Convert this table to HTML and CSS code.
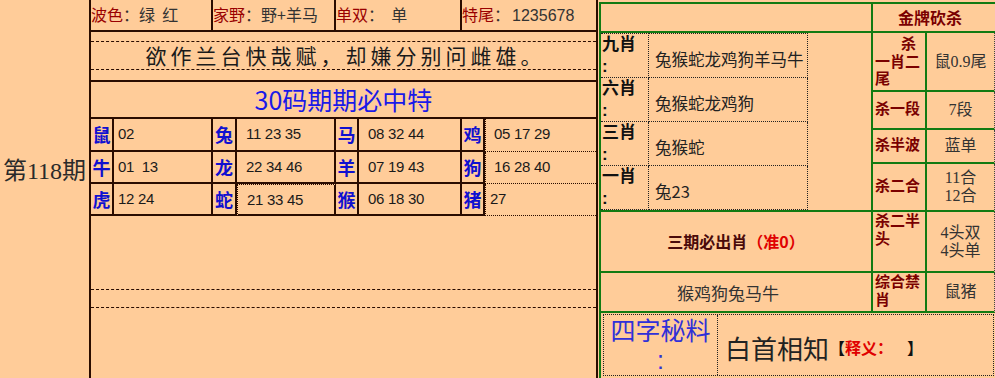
FILE: index.html
```html
<!DOCTYPE html>
<html lang="zh">
<head>
<meta charset="utf-8">
<title>第118期</title>
<link rel="stylesheet" href="styles.css">
</head>
<body>
<div class="page">
  <div class="issue"><span>第118期</span></div>

  <div class="left">
    <div class="top-row">
      <div class="tcell"><span class="k">波色</span>：<span class="v">绿&nbsp; 红</span></div>
      <div class="tcell"><span class="k">家野</span>：<span class="v">野+羊马</span></div>
      <div class="tcell"><span class="k">单双</span>：&nbsp;&nbsp;<span class="v">单</span></div>
      <div class="tcell last"><span class="k">特尾</span>：<span class="v num">1235678</span></div>
    </div>

    <div class="poem"><div class="poem-line">欲作兰台快哉赋，却嫌分别问雌雄。</div></div>

    <div class="title">30码期期必中特</div>

    <div class="zgrid">
      <div class="zl">鼠</div><div class="zn first">02</div>
      <div class="zl">兔</div><div class="zn">11 23 35</div>
      <div class="zl">马</div><div class="zn">08 32 44</div>
      <div class="zl">鸡</div><div class="zn dot">05 17 29</div>

      <div class="zl">牛</div><div class="zn first">01&nbsp; 13</div>
      <div class="zl">龙</div><div class="zn">22 34 46</div>
      <div class="zl">羊</div><div class="zn">07 19 43</div>
      <div class="zl">狗</div><div class="zn dot">16 28 40</div>

      <div class="zl">虎</div><div class="zn first">12 24</div>
      <div class="zl">蛇</div><div class="zn dot-mid">21 33 45</div>
      <div class="zl">猴</div><div class="zn">06 18 30</div>
      <div class="zl">猪</div><div class="zn dot tight">27</div>
    </div>

    <div class="blank"><div class="dash-band"></div></div>
  </div>

  <div class="right">
    <div class="h-main"></div>
    <div class="h-title">金牌砍杀</div>

    <div class="list">
      <div class="ll">九肖<br>:</div><div class="lv">兔猴蛇龙鸡狗羊马牛</div>
      <div class="ll">六肖<br>:</div><div class="lv">兔猴蛇龙鸡狗</div>
      <div class="ll">三肖<br>:</div><div class="lv">兔猴蛇</div>
      <div class="ll">一肖<br>:</div><div class="lv">兔23</div>
    </div>

    <div class="lab stack"><span class="ind">杀</span><br>一肖二<br>尾</div>
    <div class="val">鼠0.9尾</div>

    <div class="lab">杀一段</div>
    <div class="val">7段</div>

    <div class="lab">杀半波</div>
    <div class="val">蓝单</div>

    <div class="lab">杀二合</div>
    <div class="val">11合<br>12合</div>

    <div class="sanqi">三期必出肖<span class="red">（准0）</span></div>
    <div class="lab top">杀二半<br>头</div>
    <div class="val">4头双<br>4头单</div>

    <div class="animals">猴鸡狗兔马牛</div>
    <div class="lab top">综合禁<br>肖</div>
    <div class="val">鼠猪</div>

    <div class="sizi">
      <div class="sizi-box">
        <div class="sz-head">四字秘料<br>:</div>
        <div class="sz-body">白首相知<span class="br">【</span><span class="red">释义：</span><span class="br gap">】</span></div>
      </div>
    </div>
  </div>
</div>
</body>
</html>
```

FILE: styles.css
```css
* { box-sizing: border-box; }

body {
  margin: 0;
  background: #ffcc99;
  font-family: "Noto Sans CJK SC", sans-serif;
  color: #222;
}

.page {
  display: flex;
  width: 995px;
  height: 378px;
  overflow: hidden;
}

/* issue column */
.issue {
  width: 89px;
  display: flex;
  justify-content: center;
  padding-top: 155px;
  font-family: "Liberation Serif", "Noto Sans CJK SC", serif;
  font-size: 24px;
  line-height: 32px;
  color: #2a2a2a;
  white-space: nowrap;
}

/* left table */
.left {
  width: 509px;
  border-left: 2px solid #2a0c00;
  border-right: 2px solid #2a0c00;
  display: flex;
  flex-direction: column;
}

.top-row {
  display: grid;
  grid-template-columns: 122px 123px 126px 134px;
  height: 32px;
  border-bottom: 2px solid #2a0c00;
}

.tcell {
  border-right: 2px solid #2a0c00;
  font-size: 16px;
  line-height: 29px;
  color: #333;
  white-space: nowrap;
}
.tcell.last { border-right: none; }
.tcell .k { color: #990000; }
.tcell .v { color: #333; }
.tcell .num { font-family: "Liberation Sans", sans-serif; font-size: 16px; padding-left: 2px; }

.poem {
  height: 50px;
  padding-top: 9px;
  border-bottom: 2px solid #2a0c00;
}
.poem-line {
  height: 29px;
  border-top: 1px dashed #2a0c00;
  border-bottom: 1px dashed #2a0c00;
  text-align: center;
  font-size: 21px;
  line-height: 27px;
  letter-spacing: 4px;
  padding-left: 4px;
  color: #1a1a1a;
}

.title {
  height: 37px;
  border-bottom: 2px solid #2a0c00;
  text-align: center;
  font-size: 25px;
  line-height: 35px;
  color: #1a1ae8;
}

.zgrid {
  display: grid;
  grid-template-columns: 23px 99px 24px 99px 23px 103px 23px 111px;
  grid-template-rows: 33px 32px 32px;
}
.zl, .zn {
  border-right: 2px solid #2a0c00;
  border-bottom: 2px solid #2a0c00;
}
.zl {
  font-size: 18px;
  font-weight: bold;
  color: #1010d0;
  text-align: center;
  line-height: 30px;
}
.zn {
  font-family: "Liberation Sans", sans-serif;
  font-size: 15px;
  letter-spacing: -0.3px;
  line-height: 30px;
  padding-left: 9px;
  color: #1a1a1a;
  white-space: nowrap;
}
.zn.first { padding-left: 4px; }
.zn.dot {
  border-right: none;
  border-bottom: 1px dotted #2a0c00;
  border-left: 1px dotted #2a0c00;
  padding-left: 8px;
}
.zn.tight { padding-left: 4px; }
.zn.dot-mid {
  border: 1px dotted #2a0c00;
  border-right: 2px solid #2a0c00;
  border-bottom: 2px solid #2a0c00;
}

.blank { flex: 1; padding-top: 73px; }
.dash-band {
  height: 19px;
  border-top: 1px dashed #2a0c00;
  border-bottom: 1px dashed #2a0c00;
}

/* right panel */
.right {
  width: 396px;
  margin-left: 1px;
  margin-top: 2px;
  border-top: 2px solid #127a12;
  border-left: 2px solid #127a12;
  display: grid;
  grid-template-columns: 272px 54px 68px;
  grid-template-rows: 29px 59px 38px 34px 48px 61px 40px 1fr;
}

.h-main {
  border-right: 2px solid #127a12;
  border-bottom: 2px solid #127a12;
}
.h-title {
  grid-column: 2 / 4;
  border-bottom: 2px solid #127a12;
  text-align: center;
  font-size: 16px;
  font-weight: bold;
  line-height: 27px;
  color: #7a0000;
  padding-right: 8px;
}

.list {
  grid-row: 2 / 6;
  border-right: 2px solid #127a12;
  border-bottom: 2px solid #127a12;
  display: grid;
  grid-template-columns: 48px 159px;
  grid-template-rows: 45px 44px 44px 44px;
  align-content: start;
  justify-content: start;
}
.ll, .lv {
  border-right: 1px dotted #222;
  border-bottom: 1px dotted #222;
}
.ll:nth-child(1), .lv:nth-child(2) { border-top: 1px dotted #222; }
.ll {
  font-family: "Liberation Sans", "Noto Sans CJK SC", sans-serif;
  font-size: 17px;
  font-weight: bold;
  line-height: 22px;
  padding-top: 0;
  padding-left: 1px;
  color: #111;
}
.lv {
  font-size: 16.5px;
  line-height: 21px;
  padding-top: 15px;
  padding-left: 6px;
  color: #222;
  white-space: nowrap;
}

.lab {
  border-right: 2px solid #127a12;
  border-bottom: 2px solid #127a12;
  font-family: "Liberation Serif", "Noto Sans CJK SC", serif;
  font-size: 15px;
  font-weight: bold;
  color: #7a0000;
  display: flex;
  align-items: center;
  padding-left: 2px;
  line-height: 17.5px;
  white-space: nowrap;
}
.lab.stack { display: block; padding-top: 3px; }
.lab.stack .ind { padding-left: 26px; }
.lab.top { display: block; padding-top: 1px; }

.val {
  border-bottom: 2px solid #127a12;
  border-right: 1px dotted #444;
  font-family: "Liberation Serif", "Noto Sans CJK SC", serif;
  font-size: 16px;
  line-height: 18px;
  color: #333;
  display: flex;
  align-items: center;
  justify-content: center;
  text-align: center;
  white-space: nowrap;
}

.sanqi, .animals {
  border-right: 2px solid #127a12;
  border-bottom: 2px solid #127a12;
  display: flex;
  align-items: center;
  justify-content: center;
  white-space: nowrap;
}
.sanqi {
  font-size: 16px;
  font-weight: bold;
  color: #4a0a0a;
  padding-bottom: 2px;
}
.sanqi .red { color: #e00000; }
.animals {
  font-size: 17px;
  color: #333;
  padding-right: 16px;
}

.sizi {
  grid-column: 1 / 4;
  padding: 1px 1px 2px 2px;
}
.sizi-box {
  height: 100%;
  border: 1px dotted #222;
  display: grid;
  grid-template-columns: 114px 1fr;
}
.sz-head {
  border-right: 1px dotted #222;
  color: #3030d8;
  font-family: "Liberation Sans", "Noto Sans CJK SC", sans-serif;
  font-size: 25px;
  line-height: 29px;
  text-align: center;
  padding-top: 2px;
}
.sz-body {
  display: flex;
  align-items: center;
  padding-left: 7px;
  padding-top: 4px;
  font-size: 26px;
  color: #222;
  white-space: nowrap;
}
.sz-body .br { font-size: 16px; font-weight: bold; color: #111; }
.sz-body .red { font-size: 16px; font-weight: bold; color: #e00000; }
.sz-body .gap { padding-left: 14px; }
```
